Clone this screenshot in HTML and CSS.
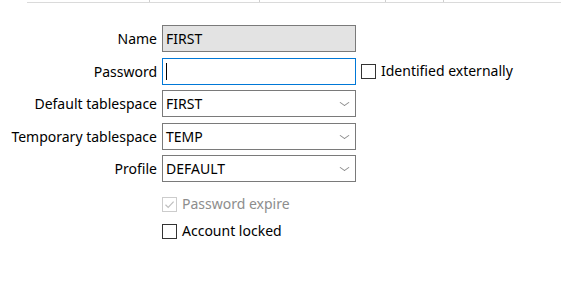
FILE: index.html
```html
<!DOCTYPE html>
<html lang="en">
<head>
  <meta charset="UTF-8">
  <title>User</title>
  <link rel="stylesheet" href="styles.css">
</head>
<body>
  <!-- header of the grid above, scrolled almost out of view -->
  <div class="grid-head">
    <div class="cell" style="width: 123px"></div>
    <div class="cell" style="width: 110px"></div>
    <div class="cell" style="width: 126px"></div>
    <div class="cell" style="width: 58px"></div>
    <div class="cell last"></div>
  </div>

  <div class="form">
    <label class="lbl">Name</label>
    <div class="field">
      <div class="input readonly">FIRST</div>
    </div>

    <label class="lbl">Password</label>
    <div class="field">
      <div class="input focused"><span class="caret"></span></div>
      <label class="check">
        <span class="box"></span>
        <span>Identified externally</span>
      </label>
    </div>

    <label class="lbl">Default tablespace</label>
    <div class="field">
      <div class="input select">FIRST<span class="chev"></span></div>
    </div>

    <label class="lbl">Temporary tablespace</label>
    <div class="field">
      <div class="input select">TEMP<span class="chev"></span></div>
    </div>

    <label class="lbl">Profile</label>
    <div class="field">
      <div class="input select">DEFAULT<span class="chev"></span></div>
    </div>
  </div>

  <div class="options">
    <label class="check disabled">
      <span class="box">
        <svg width="13" height="13" viewBox="0 0 13 13"><path d="M2.5 6.8 L5.2 9.4 L10.6 3.6" fill="none" stroke="#bfbfbf" stroke-width="1.2"/></svg>
      </span>
      <span>Password expire</span>
    </label>
    <label class="check">
      <span class="box"></span>
      <span>Account locked</span>
    </label>
  </div>
</body>
</html>
```

FILE: styles.css
```css
body {
  margin: 0;
  background: #fff;
  color: #000;
  font-family: 'Noto Sans', 'Open Sans', sans-serif;
  font-size: 14px;
}
.grid-head {
  display: flex;
  margin-left: 27px;
  height: 2px;
  border-bottom: 1px solid #dadada;
}
.grid-head .cell {
  border-right: 1px solid #cfcfcf;
  box-sizing: border-box;
}
.grid-head .last {
  flex: 1;
  border-right: none;
}
.form {
  display: grid;
  grid-template-columns: 157px auto;
  column-gap: 5px;
  row-gap: 5.5px;
  margin-top: 22px;
}
.lbl {
  text-align: right;
  line-height: 27px;
  white-space: nowrap;
}
.field {
  display: flex;
  align-items: center;
  gap: 5px;
}
.input {
  box-sizing: border-box;
  width: 194px;
  height: 27px;
  border: 1px solid #7a7a7a;
  padding: 0 3px;
  line-height: 25px;
  position: relative;
}
.readonly {
  background: #e3e3e3;
}
.focused {
  border-color: #0078d7;
}
.caret {
  display: inline-block;
  width: 1px;
  height: 17px;
  background: #000;
  margin-top: 4px;
  vertical-align: top;
}
.chev {
  position: absolute;
  right: 7px;
  top: 8px;
  width: 6px;
  height: 6px;
  border-right: 1px solid #888;
  border-bottom: 1px solid #888;
  transform: scale(1, 0.7) rotate(45deg);
}
.options {
  margin-left: 162px;
  margin-top: 13px;
  display: flex;
  flex-direction: column;
  gap: 9px;
}
.check {
  display: flex;
  align-items: center;
  gap: 5px;
  line-height: 18px;
}
.check .box {
  box-sizing: border-box;
  width: 15px;
  height: 15px;
  border: 1px solid #333;
  display: flex;
  align-items: center;
  justify-content: center;
}
.check.disabled {
  color: #8d8d8d;
}
.check.disabled .box {
  border-color: #cccccc;
}
```
